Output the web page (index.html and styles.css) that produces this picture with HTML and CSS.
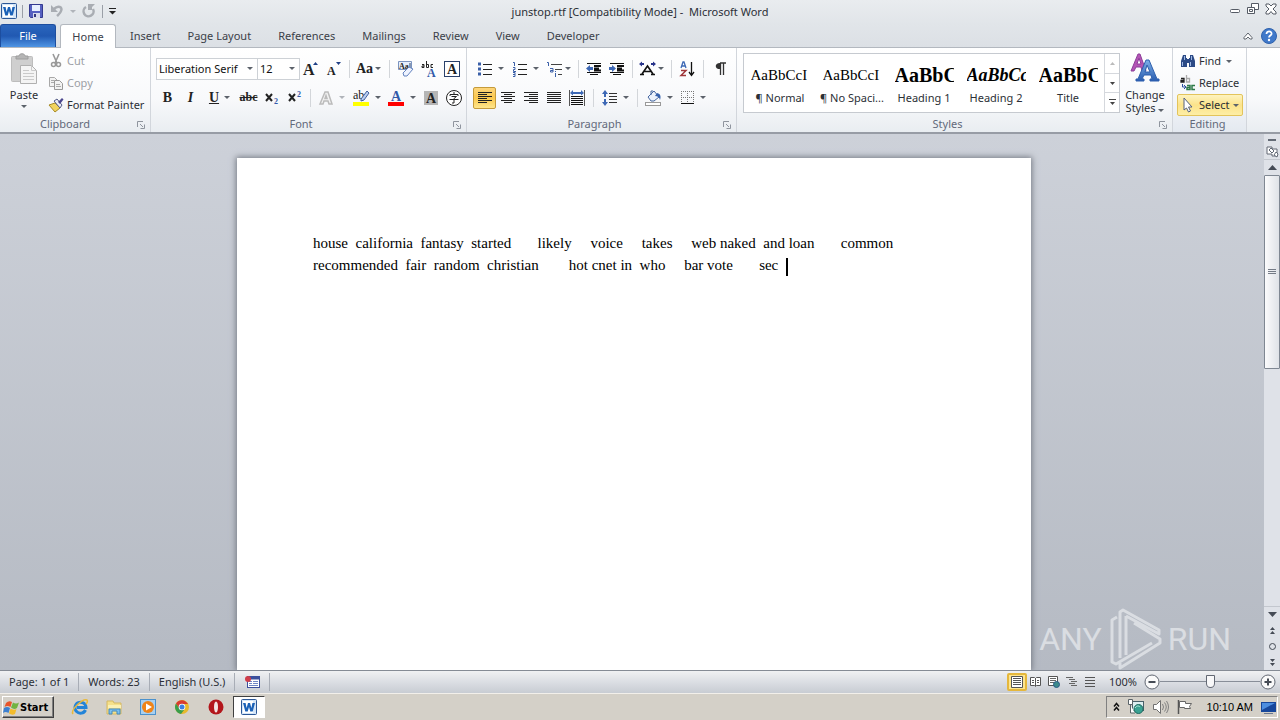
FILE: index.html
```html
<!DOCTYPE html>
<html lang="en">
<head>
    <meta charset="UTF-8">
    <meta name="viewport" content="width=device-width, initial-scale=1.0">
    <title>junstop.rtf [Compatibility Mode] - Microsoft Word</title>
    <link rel="stylesheet" href="styles.css">
</head>
<body>
    <svg class="defs" aria-hidden="true">
        <defs>
            <linearGradient id="blueA" x1="0" y1="0" x2="0" y2="1"><stop offset="0" stop-color="#7db0e8"/><stop offset="1" stop-color="#2a5db0"/></linearGradient>
            <symbol id="launcher" viewBox="0 0 8 8"><path d="M.5 6V.5H6" fill="none" stroke="#8f959e"/><path d="M3 3l3 3M7.500 3.500v4h-4" fill="none" stroke="#8f959e"/></symbol>
            <symbol id="word" viewBox="0 0 16 16"><rect x=".5" y=".5" width="15" height="15" rx="1" fill="#d5e6f8" stroke="#2b5797"/><path d="M2 2h10v12H2z" fill="#fff"/><path d="M2 4h2.600l1 5L7 4h2l1.400 5 1-5H14l-2.300 8.500H9.300L8 8l-1.300 4.500H4.300z" fill="#1b62b8"/></symbol>
        </defs>
    </svg>
    <div class="app">
        <!-- title bar -->
        <header class="titlebar">
            <div class="quick">
                <svg width="16" height="16"><use href="#word"/></svg>
                <i class="bar"></i>
                <button class="qbtn" aria-label="Save"><svg width="14" height="14"><path d="M.5.500h13v13h-12l-1-1z" fill="#5560c0" stroke="#343a90"/><rect x="3" y="1" width="8" height="6" fill="#e8f0ff"/><rect x="4" y="9" width="7" height="5" fill="#d8dcec"/><rect x="5" y="10" width="2" height="3" fill="#30367e"/></svg></button>
                <button class="qbtn" aria-label="Undo"><svg width="14" height="14"><path d="M4 5c4-4 9-2 7 2-.5 2-2 3-4 5" fill="none" stroke="#a9adb3" stroke-width="2.500"/><path d="M1 1v7h7z" fill="#a9adb3"/></svg></button>
                <i class="caret light"></i>
                <button class="qbtn" aria-label="Repeat"><svg width="14" height="14"><path d="M4 3a5 5 0 1 0 7 2" fill="none" stroke="#a9adb3" stroke-width="2.500"/><path d="M6 0h7l-3 3v3H6z" fill="#a9adb3"/></svg></button>
                <i class="bar"></i>
                <button class="qbtn" aria-label="Customize"><svg width="8" height="8"><path d="M0 1.500h7" stroke="#222"/><path d="M0 4h7L3.500 7.500z" fill="#222"/></svg></button>
            </div>
            <h1>junstop.rtf [Compatibility Mode] - &nbsp;Microsoft Word</h1>
            <div class="winbtns">
                <button aria-label="Minimize"><svg width="12" height="12"><rect x="1.500" y="6.500" width="9" height="3" rx="1" fill="#fff" stroke="#555b65"/></svg></button>
                <button aria-label="Restore"><svg width="12" height="12"><path d="M4.500.500h7v6h-7z" fill="#fff" stroke="#555b65"/><path d="M.5 4.500h7v6h-7z" fill="#fff" stroke="#555b65"/><path d="M2.500 6.500h3v2h-3z" fill="none" stroke="#555b65"/></svg></button>
                <button aria-label="Close"><svg width="12" height="12"><path d="M1 1h3l2 2 2-2h3v2L8 6l3 3v2H8L6 8.500 4 11H1V9l3-3-3-3z" fill="#fff" stroke="#555b65"/></svg></button>
            </div>
        </header>
        <!-- ribbon tabs -->
        <nav class="tabs">
            <button class="tab file">File</button>
            <button class="tab active">Home</button>
            <button class="tab">Insert</button>
            <button class="tab">Page Layout</button>
            <button class="tab">References</button>
            <button class="tab">Mailings</button>
            <button class="tab">Review</button>
            <button class="tab">View</button>
            <button class="tab">Developer</button>
            <div class="tabs-end">
                <button aria-label="Minimize ribbon"><svg width="10" height="8"><path d="M1 5.500L5 1l4 4.500v1.500H7L5 5 3 7H1z" fill="#fff" stroke="#60666f"/></svg></button>
                <button aria-label="Help"><svg width="16" height="16"><circle cx="8" cy="8" r="7.500" fill="#4079ca" stroke="#2f62ac"/><path d="M5.500 6c0-3.500 5.500-3.300 5 0-.3 1.500-2.500 1.700-2.500 3.500" fill="none" stroke="#fff" stroke-width="1.800"/><circle cx="8" cy="12" r="1.200" fill="#fff"/></svg></button>
            </div>
        </nav>
        <!-- ribbon -->
        <section class="ribbon">
            <div class="group clipboard">
                <div class="group-body">
                    <button class="big">
                        <svg width="28" height="32"><rect x="1.500" y="3.500" width="21" height="25" rx="1" fill="#cfcfcf" stroke="#bdbdbd"/><path d="M6 6V3h3c0-3 6-3 6 0h3v3z" fill="#b5b5b5" stroke="#9d9d9d"/><path d="M10.500 12.500h11l5 5v13h-16z" fill="#f4f4f4" stroke="#b0b0b0"/><path d="M21.500 12.500v5h5M13 17.500h6M13 20.500h11M13 23.500h11M13 26.500h11" fill="none" stroke="#cacaca"/></svg>
                        <span>Paste</span><i class="caret"></i>
                    </button>
                    <div class="stack">
                        <button class="cmd off"><svg width="16" height="16"><path d="M5 1l4 9M11 1L7 10" stroke="#999" stroke-width="1.600"/><circle cx="5.500" cy="11.500" r="2" fill="none" stroke="#999" stroke-width="1.500"/><circle cx="10.500" cy="11.500" r="2" fill="none" stroke="#999" stroke-width="1.500"/></svg>Cut</button>
                        <button class="cmd off"><svg width="16" height="16"><path d="M1.500 2.500h5l3 3v6h-8z" fill="#f2f2f2" stroke="#a8a8a8"/><path d="M6.500 5.500h5l3 3v6h-8z" fill="#f2f2f2" stroke="#999"/><path d="M3 5.500h3M3 7.500h3M8 9.500h4M8 11.500h5" stroke="#aaa"/></svg>Copy</button>
                        <button class="cmd"><svg width="16" height="16"><path d="M1 8l6-2 5 5-5 4z" fill="#f1d35d" stroke="#a68a25"/><path d="M6 4l6 7 2-3-5-6z" fill="#e9ebf5" stroke="#555c86"/><path d="M10 5l4-4 1.500 1.500L12 7z" fill="#4a468d"/></svg>Format Painter</button>
                    </div>
                </div>
                <div class="group-name">Clipboard<svg class="launch" width="8" height="8"><use href="#launcher"/></svg></div>
            </div>
            <div class="group font">
                <div class="rows">
                    <div class="row">
                        <label class="combo family"><select aria-label="Font"><option>Liberation Serif</option></select><i class="caret"></i></label>
                        <label class="combo size"><select aria-label="Font size"><option>12</option></select><i class="caret"></i></label>
                        <button class="ico" aria-label="Grow font"><svg width="16" height="16"><text x="0" y="14" class="gl g16">A</text><path d="M10 4l2.500-3L15 4z" fill="#1f3f86"/></svg></button>
                        <button class="ico" aria-label="Shrink font"><svg width="16" height="16"><text x="1" y="14" class="gl g12">A</text><path d="M10 1h5l-2.500 3z" fill="#1f3f86"/></svg></button>
                        <i class="sep"></i>
                        <button class="ico narrow"><span class="serif">Aa</span><i class="caret"></i></button>
                        <i class="sep wide"></i>
                        <button class="ico" aria-label="Clear formatting"><svg width="16" height="16"><path d="M.5.500h13v8H.5z" fill="#e6eefb" stroke="#7b93bf"/><text x="1" y="8" class="gl g8">Aa</text><path d="M12 2v5" stroke="#29406b"/><path d="M5 12l6-6 4 2-6 7H6z" fill="#eef3ff" stroke="#6483bf"/></svg></button>
                        <button class="ico" aria-label="Phonetic guide"><svg width="16" height="16"><path d="M1 3.500h2v3H1v-1.500h2M5.500 0v6.500h2v-3h-2M12 3.500h-2v3h2" fill="none" stroke="#222"/><text x="6" y="16" class="gl g12 blue">A</text></svg></button>
                        <button class="ico" aria-label="Character border"><svg width="16" height="16"><rect x=".5" y=".5" width="15" height="15" fill="#fff" stroke="#29406b"/><text x="3" y="13" class="gl g14">A</text></svg></button>
                    </div>
                    <div class="row">
                        <button class="ico"><b class="serif">B</b></button>
                        <button class="ico"><em class="serif">I</em></button>
                        <button class="ico drop"><u class="serif">U</u><i class="caret"></i></button>
                        <button class="ico"><s class="serif small">abc</s></button>
                        <button class="ico" aria-label="Subscript"><svg width="16" height="16"><path d="M2 4l6 7M8 4l-6 7" stroke="#222" stroke-width="2"/><text x="10" y="14" class="gl g8 blue">2</text></svg></button>
                        <button class="ico" aria-label="Superscript"><svg width="16" height="16"><path d="M2 4l6 7M8 4l-6 7" stroke="#222" stroke-width="2"/><text x="10" y="7" class="gl g8 blue">2</text></svg></button>
                        <i class="sep"></i>
                        <button class="ico drop pale" aria-label="Text effects"><svg width="16" height="16"><path d="M2 14L7 2h3l4 12h-3l-1-3H6l-1 3zM7 8.500h2L8 5.500z" fill="#f2f2f2" stroke="#bbb" stroke-width="1.500"/></svg><i class="caret light"></i></button>
                        <button class="ico drop" aria-label="Highlight"><svg width="17" height="17"><text x="0" y="10" class="gl g12 plain">ab</text><path d="M8 10l6-8 2 2-5 7-3 1z" fill="#b8cdf0" stroke="#3f5f9f"/><rect y="13" width="16" height="4" fill="#ff0"/></svg><i class="caret"></i></button>
                        <button class="ico drop" aria-label="Font color"><svg width="17" height="17"><text x="3" y="12" class="gl g14 blue">A</text><rect y="13" width="16" height="4" fill="#f00"/></svg><i class="caret"></i></button>
                        <button class="ico" aria-label="Character shading"><svg width="16" height="16"><rect x="1" y="1" width="14" height="14" fill="#b5b5b5"/><text x="3" y="13" class="gl g14">A</text></svg></button>
                        <button class="ico" aria-label="Enclose characters"><svg width="16" height="16"><circle cx="8" cy="8" r="7.500" fill="#fff" stroke="#222"/><path d="M8 2v2M4 6V4.500h8V6M5.500 6.500h5L8 8.500v4.500H6M3.500 9.500h9" fill="none" stroke="#222"/></svg></button>
                    </div>
                </div>
                <div class="group-name">Font<svg class="launch" width="8" height="8"><use href="#launcher"/></svg></div>
            </div>
            <div class="group para">
                <div class="rows">
                    <div class="row">
                        <button class="ico drop" aria-label="Bullets"><svg width="16" height="16"><path d="M1 3h3M1 8h3M1 13h3" stroke="#3a5fa8" stroke-width="3"/><path d="M6 3.500h9M6 8.500h9M6 13.500h9" stroke="#222"/></svg><i class="caret"></i></button>
                        <button class="ico drop" aria-label="Numbering"><svg width="16" height="16"><path d="M1 1.500h1.500V5M1 6.500h2v2H1.500v2H4M1 11.500h2v4H1M1 13.500h2" fill="none" stroke="#3a5fa8"/><path d="M6 3.500h9M6 8.500h9M6 13.500h9" stroke="#222"/></svg><i class="caret"></i></button>
                        <button class="ico narrow" aria-label="Multilevel list"><svg width="17" height="16"><path d="M1 1.500h1.500V5M4 7.500h3V11H4.500V9.500H7M9.500 10v1M9.500 12v4" fill="none" stroke="#3a5fa8"/><path d="M5 3.500h11M9 8.500h7M12 13.500h4" stroke="#444"/></svg><i class="caret"></i></button>
                        <i class="sep"></i>
                        <button class="ico" aria-label="Decrease indent"><svg width="16" height="16"><path d="M1 2.500h14M1 11.500h14M4 13.500h8" stroke="#111"/><path d="M8 5h7M8 7.500h5M8 9.500h7" stroke="#111" stroke-width="2"/><path d="M0 7.500L4 4v2h3v3H4v2z" fill="#3d68b5"/></svg></button>
                        <button class="ico" aria-label="Increase indent"><svg width="16" height="16"><path d="M1 2.500h14M1 11.500h14M4 13.500h8" stroke="#111"/><path d="M8 5h7M8 7.500h5M8 9.500h7" stroke="#111" stroke-width="2"/><path d="M7 7.500L3 4v2H0v3h3v2z" fill="#3d68b5"/></svg></button>
                        <i class="sep"></i>
                        <button class="ico narrow" aria-label="Asian layout"><svg width="17" height="16"><path d="M1 13.500h4M12 13.500h4M3 13L8.500 5 14 13M5 10.500h7" fill="none" stroke="#111" stroke-width="1.600"/><path d="M0 3l3-2.500V2h2v2H3v1.500zM17 3l-3-2.500V2h-2v2h2v1.500z" fill="#28348b"/></svg><i class="caret"></i></button>
                        <i class="sep"></i>
                        <button class="ico" aria-label="Sort"><svg width="16" height="16"><path d="M2 7l2-6h1l2 6M3 5h3" fill="none" stroke="#3d68b5" stroke-width="1.300"/><path d="M2 9.500h5L2 14.500h5" fill="none" stroke="#a0383c" stroke-width="1.500"/><path d="M12.500 1v12M10 11l2.500 3.500L15 11" fill="none" stroke="#111" stroke-width="1.300"/></svg></button>
                        <i class="sep wide"></i>
                        <button class="ico" aria-label="Show marks"><svg width="12" height="14"><path d="M6 1h6M6.500 1v12M9.500 1v12" stroke="#333" stroke-width="1.300"/><path d="M7 1C0 0 0 8 7 7z" fill="#333"/></svg></button>
                    </div>
                    <div class="row">
                        <button class="ico on" aria-label="Align left"><svg width="14" height="12"><path d="M0 .5h14M0 2.500h9M0 4.500h14M0 6.500h9M0 8.500h14M0 10.500h9" stroke="#222"/></svg></button>
                        <button class="ico" aria-label="Center"><svg width="14" height="12"><path d="M0 .5h14M3 2.500h8M0 4.500h14M3 6.500h8M0 8.500h14M3 10.500h8" stroke="#222"/></svg></button>
                        <button class="ico" aria-label="Align right"><svg width="14" height="12"><path d="M0 .5h14M5 2.500h9M0 4.500h14M5 6.500h9M0 8.500h14M5 10.500h9" stroke="#222"/></svg></button>
                        <button class="ico" aria-label="Justify"><svg width="14" height="12"><path d="M0 .5h14M0 2.500h14M0 4.500h14M0 6.500h14M0 8.500h14M0 10.500h14" stroke="#222"/></svg></button>
                        <button class="ico" aria-label="Distributed"><svg width="16" height="16"><path d="M.5 0v16M15.500 0v16" stroke="#555"/><path d="M2 6.500h12M2 8.500h12M2 10.500h12M2 12.500h12M2 14.500h12" stroke="#111"/><path d="M1 3l3-3v2h8V0l3 3-3 2.500V4H4v1.500z" fill="#3d68b5"/></svg></button>
                        <i class="sep wide"></i>
                        <button class="ico drop" aria-label="Line spacing"><svg width="16" height="16"><path d="M3 0l3 4H4v3H2V4H0zM3 16l3-4H4V9H2v3H0z" fill="#3d68b5"/><path d="M7 3.500h8M7 6.500h8M7 9.500h8M7 12.500h8" stroke="#333"/></svg><i class="caret"></i></button>
                        <i class="sep"></i>
                        <button class="ico drop" aria-label="Shading"><svg width="17" height="16"><path d="M3 7l6-6 5 6-5 4H6z" fill="#eaf1fc" stroke="#45669f"/><path d="M12 3c4 1 4 4 3 7-1-3-2-4-5-4z" fill="#3561ad"/><path d="M6 5V1h2" fill="none" stroke="#45669f"/><rect x=".5" y="12.500" width="15" height="3" fill="#fff" stroke="#999"/></svg><i class="caret"></i></button>
                        <button class="ico drop" aria-label="Borders"><svg width="14" height="14"><path d="M.5 0v12M6.500 0v12M12.500 0v12M0 .5h13M0 6.500h13" stroke="#777" stroke-dasharray="1 1"/><path d="M0 12.500h13" stroke="#111"/></svg><i class="caret"></i></button>
                    </div>
                </div>
                <div class="group-name">Paragraph<svg class="launch" width="8" height="8"><use href="#launcher"/></svg></div>
            </div>
            <div class="group styles">
                <div class="group-body">
                    <div class="gallery">
                        <button class="style"><span class="sample">AaBbCcI</span><span>¶ Normal</span></button>
                        <button class="style"><span class="sample">AaBbCcI</span><span>¶ No Spaci...</span></button>
                        <button class="style"><span class="sample heavy">AaBbC</span><span>Heading 1</span></button>
                        <button class="style"><span class="sample heavy slant">AaBbCc</span><span>Heading 2</span></button>
                        <button class="style"><span class="sample heavy">AaBbC</span><span>Title</span></button>
                        <div class="spin">
                            <button aria-label="Up"><svg width="5" height="3"><path d="M0 3h5L2.500 0z" fill="#bbb"/></svg></button>
                            <button aria-label="Down"><svg width="5" height="3"><path d="M0 0h5L2.500 3z" fill="#444"/></svg></button>
                            <button aria-label="More"><svg width="7" height="7"><path d="M0 .5h7" stroke="#444"/><path d="M1 3h5L3.500 6z" fill="#444"/></svg></button>
                        </div>
                    </div>
                    <button class="big change">
                        <svg width="32" height="30"><path d="M2 18L9 1h2l6 17h-4l-1-4H7l-2 4zM8 11h4l-2-6z" fill="#b455b5" stroke="#8d3f9a"/><path d="M7 28v-2h2L17 7h3l8 19h2v2h-9v-2h2l-1-4h-7l-2 4h2v2zM16 19h5l-3-7z" fill="url(#blueA)" stroke="#2d5fae"/></svg>
                        <span>Change</span><span>Styles <i class="caret"></i></span>
                    </button>
                </div>
                <div class="group-name">Styles<svg class="launch" width="8" height="8"><use href="#launcher"/></svg></div>
            </div>
            <div class="group editing">
                <div class="stack">
                    <button class="cmd"><svg width="16" height="14"><path d="M3 1h3v3h1v9H1V7zM10 1h3l2 6v6H9V4h1zM7 5h2v4H7z" fill="#2c4a86"/><path d="M2.500 8v4M10.500 8v4M4.500 2v4M11.500 2v4" stroke="#9db7e4"/></svg>Find<i class="caret"></i></button>
                    <button class="cmd"><svg width="16" height="16"><path d="M1 3.500h3V7H1V5.500h3" fill="none" stroke="#222" stroke-width="1.300"/><path d="M6.500 0v7h3V3.500h-3" fill="none" stroke="#aaa" stroke-width="1.300"/><path d="M2.500 9v3H5M4 10l2 2-2 2" fill="none" stroke="#2a4fa0"/><path d="M7 10.500h3v4H7v-2h3M15 10.500h-3v4h3" fill="none" stroke="#2c7a48" stroke-width="1.500"/></svg>Replace</button>
                    <button class="cmd hot"><svg width="16" height="16"><path d="M4 1l8 9H8.500l2 4-2 1-2-4L4 13z" fill="#fff" stroke="#54617e"/></svg>Select<i class="caret"></i></button>
                </div>
                <div class="group-name">Editing</div>
            </div>
        </section>
        <!-- document -->
        <main class="work">
            <div class="canvas">
                <article class="page">
                    <p>house  california  fantasy  started       likely     voice     takes     web naked  and loan       common</p>
                    <p>recommended  fair  random  christian        hot cnet in  who     bar vote       sec  <i class="cursor"></i></p>
                </article>
                <div class="watermark">
                    <span>ANY</span>
                    <svg width="54" height="62" viewBox="0 0 54 62" aria-hidden="true"><path d="M9 9l-5 3v42l4 2 36-21M18 47V8M12 50V4l3-2 36 20v4L18 8M26 15l26 16v4L12 60v-5" fill="none" stroke="#e3e6ea" stroke-width="3" stroke-linejoin="round"/></svg>
                    <span>RUN</span>
                </div>
            </div>
            <div class="scroll">
                <button class="split" aria-label="Split"></button>
                <button aria-label="Ruler"><svg width="13" height="13"><path d="M1 2h5v2h5v7H6V9H1z" fill="#fff" stroke="#626975"/><path d="M3 5l2-2 3 3-2 2zM8 10l2-3 2 2-1 3z" fill="#fff" stroke="#626975"/></svg></button>
                <button class="line" aria-label="Scroll up"><svg width="9" height="5"><path d="M0 5h9L4.500 0z" fill="#454b55"/></svg></button>
                <div class="track"><div class="thumb"><svg width="8" height="6"><path d="M0 .5h8M0 2.500h8M0 4.500h8" stroke="#747b86"/></svg></div></div>
                <button class="line" aria-label="Scroll down"><svg width="9" height="5"><path d="M0 0h9L4.500 5z" fill="#454b55"/></svg></button>
                <button aria-label="Previous page"><svg width="5" height="7"><path d="M0 3h5L2.500 0zM0 7h5L2.500 4z" fill="#454b55"/></svg></button>
                <button aria-label="Browse object"><svg width="9" height="9"><circle cx="4.500" cy="4.500" r="3" fill="none" stroke="#454b55"/></svg></button>
                <button aria-label="Next page"><svg width="5" height="7"><path d="M0 0h5L2.500 3zM0 4h5L2.500 7z" fill="#454b55"/></svg></button>
            </div>
        </main>
        <!-- status bar -->
        <footer class="status">
            <span class="cell">Page: 1 of 1</span>
            <span class="cell">Words: 23</span>
            <span class="cell">English (U.S.)</span>
            <span class="cell"><svg width="16" height="14"><rect x="3.500" y="1.500" width="12" height="11" fill="#fff" stroke="#3b4f9c"/><path d="M3 3h13" stroke="#3b4f9c" stroke-width="3"/><path d="M5 6.500h3M9 6.500h5M5 8.500h3M9 8.500h5M5 10.500h9" stroke="#6f86c5"/><circle cx="4" cy="4" r="3" fill="#cf3d4a"/></svg></span>
            <div class="views">
                <button class="view on" aria-label="Print layout"><svg width="14" height="12"><path d="M1.500.500h11v11h-11z" fill="#fff" stroke="#555"/><path d="M3 2.500h8M3 4.500h8M3 6.500h8M3 8.500h8" stroke="#555"/></svg></button>
                <button class="view" aria-label="Reading"><svg width="12" height="12"><path d="M.5 1.500h4l1 1 1-1h4v8h-4l-1 1-1-1h-4zM5.500 2v8" fill="#fff" stroke="#555"/><path d="M2 4.500h2M2 6.500h2M7 4.500h2M7 6.500h2" stroke="#555"/></svg></button>
                <button class="view" aria-label="Web layout"><svg width="12" height="12"><path d="M.5.500h9v9h-9z" fill="#fff" stroke="#555"/><path d="M2 2.500h6M2 4.500h6M2 6.500h4" stroke="#666"/><circle cx="8.500" cy="8.500" r="3" fill="#3d8a8b" stroke="#295a86"/></svg></button>
                <button class="view" aria-label="Outline"><svg width="12" height="10"><path d="M0 .5h7M3 2.500h6M5 4.500h6M3 6.500h6M5 8.500h6" stroke="#666"/></svg></button>
                <button class="view" aria-label="Draft"><svg width="12" height="10"><path d="M1 .5h10M1 3.500h10M1 6.500h10M1 9.500h10" stroke="#555"/></svg></button>
                <span class="pct">100%</span>
                <button class="round" aria-label="Zoom out"><svg width="16" height="16"><circle cx="8" cy="8" r="7" fill="#fafafa" stroke="#626873"/><path d="M4.500 8h7" stroke="#454b55" stroke-width="2"/></svg></button>
                <input class="zoom" type="range" min="0" max="100" value="50" aria-label="Zoom">
                <button class="round" aria-label="Zoom in"><svg width="16" height="16"><circle cx="8" cy="8" r="7" fill="#fafafa" stroke="#626873"/><path d="M4.500 8h7M8 4.500v7" stroke="#454b55" stroke-width="2"/></svg></button>
            </div>
        </footer>
        <!-- taskbar -->
        <footer class="taskbar">
            <button class="start"><svg width="16" height="15"><path d="M3 3q3-3 6-1L7.500 7q-3-2-6 0z" fill="#e8552b"/><path d="M10 2.500q3 2 6 0L14 8q-3 2-6-.5z" fill="#71b340"/><path d="M1 8q3-2 6 0l-1.500 5q-3-2-5.500 0z" fill="#3c80d0"/><path d="M7.500 8.500q3 2 6 .5L12 14q-3 1.500-6-.5z" fill="#f3bc2c"/></svg>Start</button>
            <button class="task" aria-label="Internet Explorer"><svg width="18" height="18"><path d="M14.500 12A5.500 5.500 0 1 1 15 9.500H6" fill="none" stroke="#2384d8" stroke-width="3"/><path d="M2 16C-1 12 12 0 16 2c1 1 0 3-1 4" fill="none" stroke="#e9b93b" stroke-width="1.500"/></svg></button>
            <button class="task" aria-label="Explorer"><svg width="17" height="16"><path d="M1 2h6l1 2h7v11H1z" fill="#f5e08a" stroke="#d5b862"/><path d="M2 6h13v3H2z" fill="#fbf0b4"/><path d="M3 15v-5h11v5h-3v-3H6v3z" fill="#7cc0ee" stroke="#4389bf"/></svg></button>
            <button class="task" aria-label="Media Player"><svg width="16" height="16"><rect x=".5" y=".5" width="15" height="15" fill="#a8d0f0" stroke="#4b91cc"/><circle cx="8" cy="8" r="6" fill="#f08418"/><path d="M6 4.500v7L12 8z" fill="#fff"/></svg></button>
            <button class="task" aria-label="Chrome"><svg width="14" height="14"><circle cx="7" cy="7" r="7" fill="#e7b92d"/><path d="M1 3.500A7 7 0 0 1 13 4H7L4 8z" fill="#d93b30"/><path d="M1 3.500A7 7 0 0 0 6 14l3-4-5-2z" fill="#3a9d4b"/><circle cx="7" cy="7" r="3.300" fill="#fff"/><circle cx="7" cy="7" r="2.500" fill="#3e7fe0"/></svg></button>
            <button class="task" aria-label="Opera"><svg width="16" height="16"><circle cx="8" cy="8" r="7.500" fill="#b3161b"/><ellipse cx="8" cy="8" rx="2" ry="5.500" fill="#f3e4e2"/></svg></button>
            <button class="task open" aria-label="Word"><svg width="16" height="16"><use href="#word"/></svg></button>
            <div class="tray">
                <svg width="7" height="10"><path d="M1 4.500l2.500-3 2.500 3M1 8.500l2.500-3 2.500 3" fill="none" stroke="#111" stroke-width="1.500"/></svg>
                <svg width="16" height="16"><rect x="4.500" y="2.500" width="11" height="9" fill="#dceef0" stroke="#49606a"/><path d="M.5.500h4v5h-4zM2.500 6v8H7" fill="#fff" stroke="#5b6468"/><circle cx="10.500" cy="10" r="4.500" fill="#3aa293" stroke="#20685f"/><path d="M7 9c2-3 4-2 5-1" fill="none" stroke="#b8ecdf"/></svg>
                <svg width="17" height="16"><path d="M1.500 5.500h3l4-4v13l-4-4h-3z" fill="#fff" stroke="#707070"/><path d="M10.500 5q2 3 0 6M12.500 3.500q3.500 4.500 0 9M14.500 2q4 6 0 12" fill="none" stroke="#808080"/></svg>
                <svg width="16" height="16"><path d="M1.500 1v14" stroke="#555" stroke-width="1.500"/><path d="M2.500 2.500h6v2h6l-2 3 1 2h-6v-1h-5z" fill="#fff" stroke="#666"/></svg>
                <time>10:10 AM</time>
                <svg width="15" height="13"><path d="M0 1h15v10H0z" fill="#17479b"/><path d="M1 2h13L1 9z" fill="#4d8ee0"/><path d="M3 12.500h9" stroke="#6b7890"/></svg>
            </div>
        </footer>
    </div>
</body>
</html>
```
FILE: styles.css
```css
* {
    box-sizing: border-box;
}
body, html {
    margin: 0;
    height: 100%;
    overflow: hidden;
    font-family: "Noto Sans", "Open Sans", sans-serif;
    font-size: 11px;
    line-height: 16px;
    color: #2b2f36;
}
button {
    margin: 0;
    padding: 0;
    border: 0;
    background: none;
    font: inherit;
    color: inherit;
}
svg {
    display: block;
    flex: none;
    overflow: visible;
}
.defs {
    position: absolute;
    width: 0;
    height: 0;
}
.app {
    display: flex;
    flex-direction: column;
    height: 100%;
}
.caret {
    display: inline-block;
    flex: none;
    border: 3px solid transparent;
    border-top-color: #5c626b;
    border-bottom: 0;
}
.caret.light {
    border-top-color: #b0b4ba;
}

/* title bar */
.titlebar {
    display: grid;
    grid-template-columns: 1fr auto 1fr;
    align-items: center;
    height: 24px;
    background: linear-gradient(#e9ecef, #e1e5e9);
}
.titlebar h1 {
    margin: 0;
    font-size: 11px;
    font-weight: normal;
}
.quick {
    display: flex;
    align-items: center;
    gap: 5px;
    padding: 0 0 2px 1px;
}
.qbtn {
    padding: 0 1px;
}
.bar {
    width: 1px;
    height: 13px;
    background: #9a9fa7;
}
.winbtns {
    display: flex;
    justify-content: flex-end;
    gap: 6px;
    padding: 0 3px 6px 0;
}

/* tabs */
.tabs {
    display: flex;
    height: 24px;
    background: linear-gradient(#e1e5e9, #dce0e5);
    border-bottom: 1px solid #b3b8bf;
}
.tab {
    padding: 0 13px 0 14px;
    color: #3b4048;
}
.tab.file {
    width: 56px;
    margin-right: 4px;
    padding: 0;
    border: 1px solid #1d4e9f;
    border-bottom: 0;
    border-radius: 3px 3px 0 0;
    background: linear-gradient(#2b66bd, #2159b2 50%, #4f95e4);
    color: #fff;
}
.tab.active {
    width: 56px;
    margin-bottom: -1px;
    padding: 0;
    border: 1px solid #b3b8bf;
    border-bottom: 0;
    border-radius: 3px 3px 0 0;
    background: #fff;
}
.tabs-end {
    display: flex;
    align-items: center;
    gap: 8px;
    margin-left: auto;
    padding-right: 3px;
}

/* ribbon */
.ribbon {
    display: flex;
    height: 86px;
    background: linear-gradient(#fff, #f8f9fb 60%, #e9edf1);
    border-bottom: 2px solid #979ca5;
}
.group {
    position: relative;
    display: flex;
    flex-direction: column;
    justify-content: space-between;
    border-right: 1px solid #d2d6dc;
    white-space: nowrap;
}
.group-body {
    display: flex;
}
.group-name {
    display: flex;
    justify-content: center;
    height: 16px;
    padding-right: 20px;
    color: #62697a;
}
.editing .group-name {
    padding-right: 8px;
}
/* dialog launcher pinned to the group's corner */
.launch {
    position: absolute;
    right: 5px;
    bottom: 3px;
}
.clipboard {
    width: 151px;
}
.font {
    width: 316px;
    padding-left: 5px;
}
.para {
    width: 270px;
    padding-left: 6px;
}
.styles {
    width: 436px;
    padding-left: 6px;
}
.editing {
    width: 74px;
    padding-left: 4px;
    background: linear-gradient(#fff, #f4f6f9 60%, #e4e9f0);
}
.big {
    display: flex;
    flex-direction: column;
    align-items: center;
    width: 48px;
    padding-top: 5px;
}
.big svg {
    margin-bottom: 2px;
}
.big .caret {
    margin-top: 2px;
}
.change {
    width: 50px;
    line-height: 13px;
}
.change svg {
    margin-bottom: 5px;
}
.change .caret {
    vertical-align: middle;
}
.stack {
    display: flex;
    flex-direction: column;
    padding-top: 2px;
}
.cmd {
    display: flex;
    align-items: center;
    gap: 3px;
    height: 22px;
}
.cmd .caret {
    margin-left: 2px;
}
.editing .cmd {
    width: 66px;
    padding-left: 3px;
}
.cmd.off {
    color: #9c9fa5;
}
.editing .cmd.hot {
    border: 1px solid #e3c45b;
    border-radius: 2px;
    background: linear-gradient(#fdf3c0, #fce38a 50%, #fdeea6);
    padding-left: 2px;
}
.cmd.hot .caret {
    margin-left: 0;
}
.rows {
    display: flex;
    flex-direction: column;
    gap: 6px;
    padding-top: 9px;
}
.row {
    display: flex;
    align-items: center;
    height: 23px;
}
.ico {
    display: flex;
    align-items: center;
    justify-content: center;
    width: 23px;
    height: 22px;
}
.ico.drop {
    width: 35px;
    gap: 5px;
}
.ico.narrow {
    width: 31px;
    gap: 2px;
}
.ico.on {
    border: 1px solid #c59b3b;
    border-radius: 2px;
    background: linear-gradient(#fdd57b, #fbc84e 50%, #fee68c);
}
.sep {
    width: 8px;
    height: 18px;
    background: linear-gradient(#d3d6da, #d3d6da) center / 1px 100% no-repeat;
}
.sep.wide {
    width: 10px;
}
.combo {
    display: flex;
    align-items: center;
    height: 22px;
    margin-right: -1px;
    padding-right: 4px;
    border: 1px solid #cdd1d6;
    background: #fff;
}
.combo.family {
    width: 102px;
}
.combo.size {
    width: 43px;
}
.combo select {
    flex: 1;
    min-width: 0;
    padding: 0 0 0 2px;
    border: 0;
    background: none;
    font: inherit;
    color: #111;
    appearance: none;
}
.serif {
    font: bold 14px "Liberation Serif", serif;
    color: #222;
}
em.serif {
    font-style: italic;
}
.serif.small {
    font-size: 12px;
}
/* letters inside icons */
.gl {
    font-family: "Liberation Serif", serif;
    font-weight: bold;
    fill: #222;
}
.g16 { font-size: 16px; }
.g14 { font-size: 14px; }
.g12 { font-size: 12px; }
.g8 { font-size: 8px; }
.plain { font-weight: normal; }
.blue { fill: #3259a8; }

/* style gallery */
.gallery {
    display: flex;
    width: 377px;
    height: 60px;
    margin-top: 5px;
    border: 1px solid #c6cad0;
    background: #fff;
}
.style {
    display: flex;
    flex-direction: column;
    align-items: center;
    gap: 4px;
    width: 72px;
    padding-top: 10px;
}
.sample {
    width: 59px;
    overflow: hidden;
    font: 15px/22px "Liberation Serif", serif;
    color: #000;
    text-align: left;
}
.sample.heavy {
    font-size: 20px;
    font-weight: bold;
}
.sample.slant {
    font-size: 18px;
    font-style: italic;
}
.spin {
    display: flex;
    flex-direction: column;
    flex: 1;
    border-left: 1px solid #d5d8dd;
}
.spin button {
    display: flex;
    flex: 1;
    align-items: center;
    justify-content: center;
}
.spin button + button {
    border-top: 1px solid #d5d8dd;
}

/* document area */
.work {
    display: flex;
    flex: 1;
    min-height: 0;
}
.canvas {
    position: relative;
    display: flex;
    flex: 1;
    justify-content: center;
    padding: 24px 12px 0 16px;
    overflow: hidden;
    background: linear-gradient(#cdd1d9, #b5bac3);
}
.page {
    width: 794px;
    padding: 74px 76px 0;
    background: #fff;
    box-shadow: 0 0 6px 1px #747983;
    font-family: "Liberation Serif", serif;
    font-size: 15px;
    line-height: 22px;
    color: #000;
}
.page p {
    margin: 0;
    white-space: pre;
}
.cursor {
    display: inline-block;
    width: 2px;
    height: 18px;
    background: #000;
    vertical-align: middle;
}
/* watermark lies over the canvas corner */
.watermark {
    position: absolute;
    right: 33px;
    bottom: 0;
    display: flex;
    align-items: center;
    gap: 6px;
    font: 32px Roboto, sans-serif;
    color: #e3e6ea;
    opacity: 0.8;
}
.scroll {
    display: flex;
    flex-direction: column;
    width: 16px;
    padding-top: 2px;
    background: #dfe2e8;
}
.scroll button {
    display: flex;
    align-items: center;
    justify-content: center;
    height: 16px;
}
.scroll .split {
    height: 7px;
    background: linear-gradient(#646b76, #646b76) center / 8px 2px no-repeat;
}
.scroll .line {
    border-top: 1px solid #c3c7ce;
}
.track {
    flex: 1;
}
.thumb {
    display: flex;
    align-items: center;
    justify-content: center;
    height: 45%;
    border: 1px solid #7f8792;
    border-radius: 1px;
    background: linear-gradient(90deg, #fbfbfc, #dfe2e7);
}

/* status bar */
.status {
    display: flex;
    align-items: center;
    height: 23px;
    padding-bottom: 1px;
    border-top: 1px solid #858b95;
    background: linear-gradient(#f0f1f3, #dbdee3 50%, #c8ccd3);
}
.cell {
    display: flex;
    align-items: center;
    height: 18px;
    padding: 0 9px;
    border-right: 1px solid #a8adb6;
}
.views {
    display: flex;
    align-items: center;
    margin-left: auto;
    padding-right: 4px;
}
.view {
    display: flex;
    align-items: center;
    justify-content: center;
    width: 18px;
    height: 18px;
}
.view.on {
    width: 20px;
    border: 2px solid #e5b73c;
    border-radius: 2px;
    background: #fde58f;
}
.pct {
    padding: 0 7px 0 10px;
}
.zoom {
    width: 100px;
    height: 16px;
    margin: 0;
    appearance: none;
    background: linear-gradient(#888e98, #888e98) center / 100% 1px no-repeat;
}
.zoom::-webkit-slider-thumb {
    appearance: none;
    width: 9px;
    height: 13px;
    border: 1px solid #626873;
    border-radius: 1px 1px 5px 5px;
    background: #f8f8f9;
}

/* taskbar */
.taskbar {
    display: flex;
    align-items: center;
    height: 27px;
    border-top: 1px solid #f2efea;
    background: #d4d0c8;
    color: #000;
}
.start {
    display: flex;
    align-items: center;
    gap: 1px;
    width: 52px;
    height: 22px;
    margin: 0 9px 0 2px;
    border: 1px solid;
    border-color: #fff #404040 #404040 #fff;
    font: bold 11px "DejaVu Sans Condensed", "DejaVu Sans", sans-serif;
    box-shadow: inset -1px -1px #808080;
}
.task {
    display: flex;
    align-items: center;
    justify-content: center;
    width: 34px;
    height: 22px;
}
.task.open {
    width: 32px;
    border: 1px solid;
    border-color: #404040 #fff #fff #404040;
    background: #fff;
}
.tray {
    display: flex;
    align-items: center;
    gap: 8px;
    height: 22px;
    margin-left: auto;
    margin-right: 2px;
    padding: 0 1px 0 6px;
    border: 1px solid;
    border-color: #808080 #fff #fff #808080;
    font-family: "Liberation Sans", sans-serif;
}
.tray time {
    padding-left: 6px;
}
```
